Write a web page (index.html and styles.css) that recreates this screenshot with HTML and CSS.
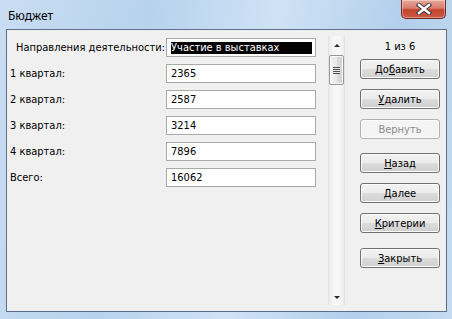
FILE: index.html
```html
<!DOCTYPE html>
<html>
    <head>
        <title>Бюджет</title>
        <link rel="stylesheet" href="styles.css">
    </head>
    <body>
        <div class="window">
            <div class="title-bar">
                <span class="title">Бюджет</span>
                <div class="close-btn">
                    <svg width="16" height="12" viewBox="0 0 16 12">
                        <path d="M3 2 L13 10 M13 2 L3 10" stroke="#3b3b3b" stroke-width="4.4" stroke-linecap="square"/>
                        <path d="M3 2 L13 10 M13 2 L3 10" stroke="#fff" stroke-width="2.4" stroke-linecap="square"/>
                    </svg>
                </div>
            </div>
            <div class="client">
                <div class="fields">
                    <label class="first">Направления деятельности:</label>
                    <div class="field"><span class="selected">Участие в выставках</span></div>

                    <label>1 квартал:</label>
                    <div class="field">2365</div>

                    <label>2 квартал:</label>
                    <div class="field">2587</div>

                    <label>3 квартал:</label>
                    <div class="field">3214</div>

                    <label>4 квартал:</label>
                    <div class="field">7896</div>

                    <label>Всего:</label>
                    <div class="field">16062</div>
                </div>

                <div class="scrollbar">
                    <span class="arrow up"></span>
                    <div class="thumb"><span class="grip"></span></div>
                    <span class="arrow down"></span>
                </div>

                <div class="actions">
                    <div class="counter">1 из 6</div>
                    <button>До<u>б</u>авить</button>
                    <button><u>У</u>далить</button>
                    <button class="disabled">Вернуть</button>
                    <button class="sep"><u>Н</u>азад</button>
                    <button><u>Д</u>алее</button>
                    <button><u>К</u>ритерии</button>
                    <button class="sep2"><u>З</u>акрыть</button>
                </div>
            </div>
        </div>
    </body>
</html>
```

FILE: styles.css
```css
body {
  margin: 0;
  font-family: "DejaVu Sans Condensed", "DejaVu Sans", sans-serif;
  font-size: 11px;
  color: #000;
}
.window {
  width: 452px;
  height: 319px;
  background: linear-gradient(100deg, #c9ddf2 0%, #b7d2ee 30%, #cfe2f5 55%, #b3cfec 80%, #c4dbf2 100%);
  overflow: hidden;
}
.title-bar {
  height: 29px;
  display: flex;
  align-items: flex-start;
  justify-content: space-between;
}
.title {
  font-family: "Noto Sans", sans-serif;
  font-size: 12px;
  margin: 7px 0 0 8px;
}
.close-btn {
  width: 43px;
  height: 18px;
  margin-right: 6px;
  border: 1px solid #6e2b22;
  border-top: 0;
  border-radius: 0 0 5px 5px;
  background: linear-gradient(#e8a99c 0%, #d77b69 45%, #c3422e 55%, #cd5a43 100%);
  box-shadow: inset 0 0 0 1px rgba(255, 255, 255, 0.35);
  display: flex;
  align-items: center;
  justify-content: center;
}
.client {
  margin-left: 6px;
  width: 439px;
  height: 281px;
  border: 1px solid #5c6f86;
  background: #f0f0f0;
  display: flex;
  align-items: flex-start;
}
.fields {
  display: grid;
  grid-template-columns: 156px 150px;
  grid-auto-rows: 19px;
  row-gap: 7px;
  margin: 8px 0 0 3px;
}
.fields label {
  line-height: 19px;
}
.fields label.first {
  padding-left: 6px;
}
.field {
  box-sizing: border-box;
  height: 19px;
  border: 1px solid #a9a9a9;
  background: #fff;
  padding-left: 4px;
  line-height: 17px;
  white-space: nowrap;
}
.selected {
  display: block;
  margin: 3px 3px 0 0;
  height: 12px;
  line-height: 12px;
  background: #000;
  color: #fff;
}
.scrollbar {
  box-sizing: border-box;
  width: 17px;
  height: 269px;
  margin: 6px 0 0 12px;
  border-left: 1px solid #e3e3e3;
  border-right: 1px solid #e3e3e3;
  background: linear-gradient(90deg, #ebebeb, #f7f7f7 30%, #f7f7f7 70%, #ebebeb);
  display: flex;
  flex-direction: column;
  align-items: center;
}
.arrow {
  width: 0;
  height: 0;
  border-left: 3px solid transparent;
  border-right: 3px solid transparent;
}
.arrow.up {
  margin-top: 8px;
  border-bottom: 3px solid #2b2b2b;
}
.arrow.down {
  margin-top: auto;
  margin-bottom: 6px;
  border-top: 3px solid #2b2b2b;
}
.thumb {
  box-sizing: border-box;
  width: 15px;
  height: 30px;
  margin-top: 8px;
  border: 1px solid #979797;
  border-radius: 2px;
  background: linear-gradient(90deg, #f3f3f3, #e9e9e9 50%, #dcdcdc 52%, #d3d3d3);
  box-shadow: inset 0 0 0 1px #fbfbfb;
  display: flex;
  align-items: center;
  justify-content: center;
}
.grip {
  width: 7px;
  height: 7px;
  background: repeating-linear-gradient(#4e4e4e 0 1px, #e8e8e8 1px 2px);
}
.actions {
  width: 80px;
  margin: 10px 0 0 15px;
  display: flex;
  flex-direction: column;
}
.counter {
  height: 13px;
  line-height: 13px;
  text-align: center;
  margin-bottom: 6px;
}
button {
  width: 80px;
  height: 20px;
  margin-bottom: 10px;
  padding: 0;
  font-family: inherit;
  font-size: 11px;
  color: #000;
  border: 1px solid #707070;
  border-radius: 3px;
  background: linear-gradient(#f2f2f2 0%, #ebebeb 50%, #dddddd 51%, #cfcfcf 100%);
  box-shadow: inset 0 0 0 1px #fcfcfc;
}
button.disabled {
  color: #8b8b8b;
  border-color: #adb2b5;
  background: #f4f4f4;
}
button.sep {
  margin-top: 4px;
}
button.sep2 {
  margin-top: 5px;
}
```
